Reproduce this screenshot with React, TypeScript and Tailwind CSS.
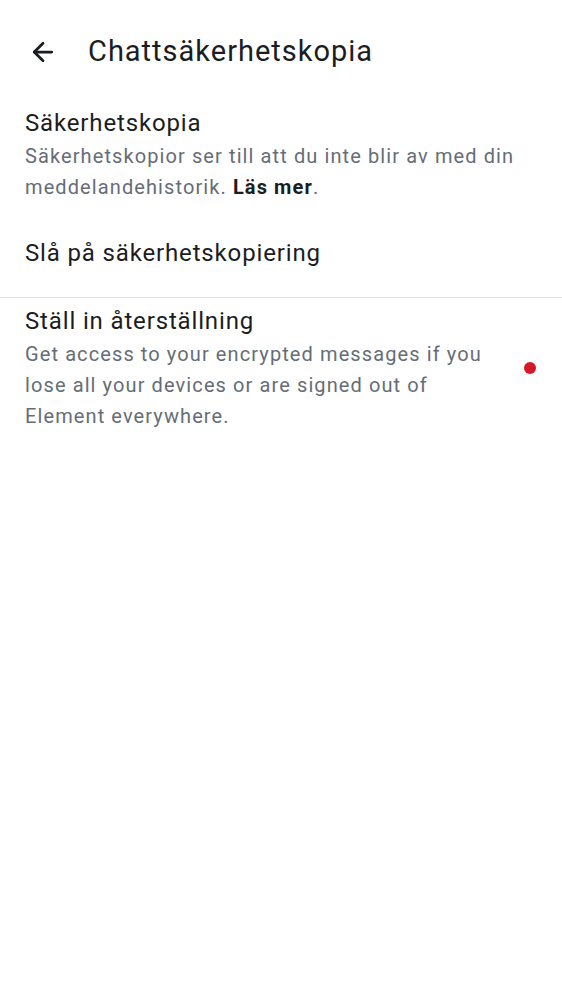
import { ArrowLeft } from 'lucide-react';

export default function App() {
  return (
    <div className="min-h-screen bg-white text-[#1b1d22]" style={{ fontFamily: 'Roboto, "Noto Sans", sans-serif' }}>
      <header className="flex h-[100px] items-center pt-[3px]">
        <button className="ml-[27px] flex h-8 w-8 items-center justify-center">
          <ArrowLeft size={30} strokeWidth={2.2} className="text-[#1b1d22]" />
        </button>
        <h1 className="ml-[29px] text-[29px] font-normal tracking-[1px]">Chattsäkerhetskopia</h1>
      </header>

      <section className="px-[25px] pt-[6px]">
        <div className="text-[24px] leading-[34px] tracking-[0.85px]">Säkerhetskopia</div>
        <p className="pt-px text-[20px] leading-[31px] tracking-[1.1px] text-[#656d77]">
          Säkerhetskopior ser till att du inte blir av med din meddelandehistorik.{' '}
          <span className="font-bold text-[#1b1d22]">Läs mer</span>.
        </p>
      </section>

      <div className="flex h-[94px] items-center px-[25px] pt-[6px] text-[24px] tracking-[0.85px]">Slå på säkerhetskopiering</div>

      <div className="h-px bg-[#e1e4e8]" />

      <section className="flex items-center pt-[6px] pl-[25px] pr-[26px]">
        <div className="flex-1">
          <div className="text-[24px] leading-[34px] tracking-[0.85px]">Ställ in återställning</div>
          <p className="pt-px pr-[20px] text-[20px] leading-[31px] tracking-[1.1px] text-[#656d77]">
            Get access to your encrypted messages if you lose all your devices or are signed out of Element everywhere.
          </p>
        </div>
        <span className="ml-4 h-3 w-3 rounded-full bg-[#d51928]" />
      </section>
    </div>
  );
}
